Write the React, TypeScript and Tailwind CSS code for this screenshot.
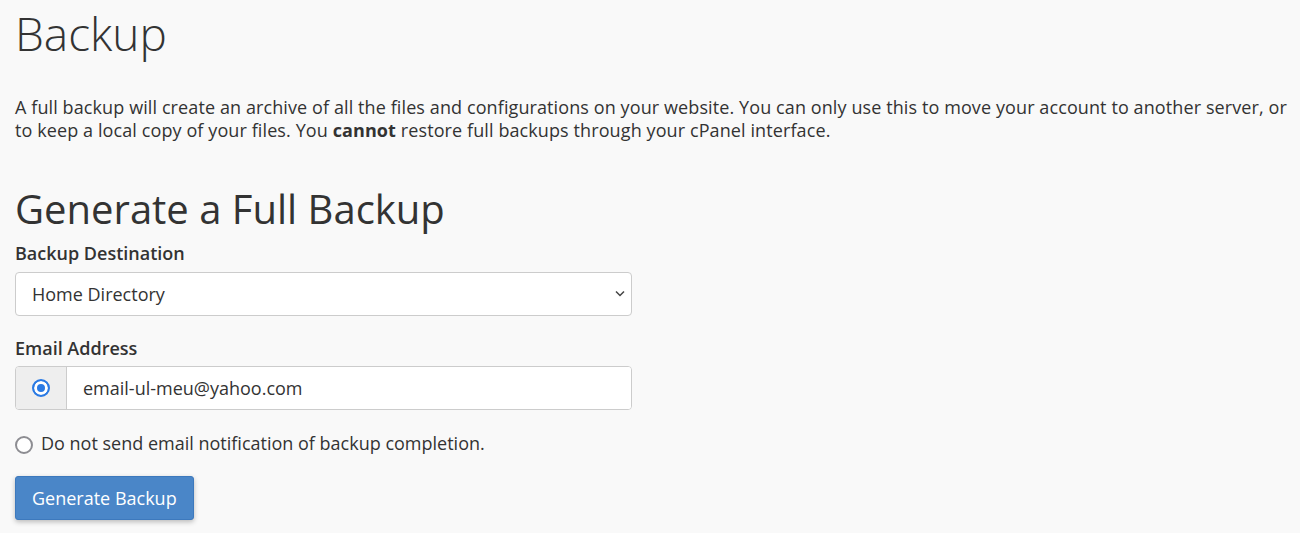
import React, { useState } from 'react';

// radio rounded by hand so it keeps the macOS look of the reference
const radioCls =
  "h-[18px] w-[18px] shrink-0 appearance-none rounded-full border-[2.5px] border-[#8d8d92] bg-white checked:border-[#2a7ae4] checked:bg-[#2a7ae4] checked:shadow-[inset_0_0_0_3px_#fff] outline-none";

export default function App() {
  const [notify, setNotify] = useState<'email' | 'none'>('email');
  const [dest, setDest] = useState('homedir');
  const [email, setEmail] = useState('email-ul-meu@yahoo.com');

  return (
    <div className="min-h-[533px] bg-[#f9f9f9] pl-[15px] pr-[8px] text-[#333] font-['Open_Sans',sans-serif]">
      <h1 className="pt-[2px] text-[46px] font-light leading-[62px]">Backup</h1>

      <p className="mt-[32px] text-[18px] leading-[23px] tracking-[0.1px]">
        A full backup will create an archive of all the files and configurations on your website. You can only use this to move your account to another server, or to keep a local copy of your files. You <strong className="font-bold">cannot</strong> restore full backups through your cPanel interface.
      </p>

      <h2 className="mt-[43px] text-[40px] font-medium leading-[48px]">Generate a Full Backup</h2>

      <form className="w-[617px]" onSubmit={(e) => e.preventDefault()}>
        <label htmlFor="dest" className="mt-[8px] block text-[18px] font-semibold leading-[25px]">
          Backup Destination
        </label>
        <div className="relative mt-[6px]">
          <select
            id="dest"
            value={dest}
            onChange={(e) => setDest(e.target.value)}
            className="h-[44px] w-full appearance-none rounded-[4px] border border-[#ccc] bg-white pl-[16px] text-[18px] text-[#333] outline-none"
          >
            <option value="homedir">Home Directory</option>
            <option value="ftp">Remote FTP Server</option>
            <option value="scp">Secure Copy (SCP)</option>
          </select>
          <svg
            className="pointer-events-none absolute right-[7px] top-[18px]"
            width="10"
            height="7"
            viewBox="0 0 10 7"
            fill="none"
            stroke="#444"
            strokeWidth="1.5"
          >
            <path d="M1 1.5l4 4 4-4" />
          </svg>
        </div>

        <label htmlFor="email" className="mt-[20px] block text-[18px] font-semibold leading-[25px]">
          Email Address
        </label>
        <div className="mt-[5px] flex h-[44px] overflow-hidden rounded-[4px] border border-[#ccc] bg-white">
          <label className="flex w-[51px] shrink-0 items-center justify-center border-r border-[#ccc] bg-[#eee]">
            <input
              type="radio"
              name="notify"
              checked={notify === 'email'}
              onChange={() => setNotify('email')}
              className={radioCls}
            />
          </label>
          <input
            id="email"
            type="text"
            value={email}
            onChange={(e) => setEmail(e.target.value)}
            className="min-w-0 flex-1 bg-white pl-[16px] text-[18px] text-[#333] outline-none"
          />
        </div>

        <label className="mt-[21px] flex items-center gap-[8px] text-[18px] leading-[25px]">
          <input
            type="radio"
            name="notify"
            checked={notify === 'none'}
            onChange={() => setNotify('none')}
            className={`mt-[3px] ${radioCls}`}
          />
          Do not send email notification of backup completion.
        </label>

        <button
          type="submit"
          className="mt-[20px] h-[44px] rounded-[3px] border border-[#3d79bd] bg-[#4a86c8] px-[16px] text-[18px] text-white shadow-[0_2px_5px_rgba(0,0,0,0.25)]"
        >
          Generate Backup
        </button>
      </form>
    </div>
  );
}
